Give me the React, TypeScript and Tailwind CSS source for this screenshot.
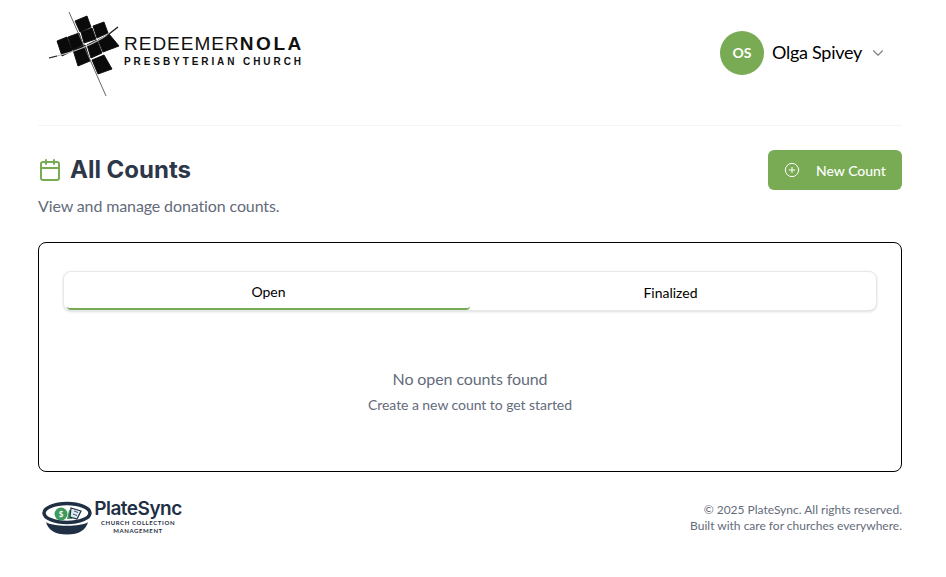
import { Calendar, ChevronDown, CirclePlus } from 'lucide-react'

// tilted cells of the church mark, corners in page px
const CELLS = [
  '75,21 87,16 91,27 80,32',
  '57,41 67,37 72,51 62,56',
  '68,37 79,33 83,45 72,50',
  '81,32 92,28 96,39 84,43',
  '93,26 104,22 108,33 97,38',
  '73,50 85,45 90,61 78,66',
  '87,45 97,40 102,53 91,58',
  '98,40 109,34 119,46 103,52',
  '92,60 104,55 112,69 98,74',
]

function ChurchLogo() {
  return (
    <svg width="90" height="90" viewBox="45 8 90 90" className="shrink-0">
      <g fill="#0a0a0a" stroke="#0a0a0a" strokeWidth="0.9">
        {CELLS.map((points) => (
          <polygon key={points} points={points} />
        ))}
      </g>
      <path d="M69 12 L106 96" stroke="#666" strokeWidth="1" fill="none" />
      <path d="M49 58 C70 53 95 46 118 27" stroke="#bbb" strokeWidth="1.2" fill="none" />
      <path d="M49 58 L57 56 M106 37 C110 33 114 30 118 27" stroke="#222" strokeWidth="1.2" fill="none" />
    </svg>
  )
}

function BowlLogo() {
  return (
    <svg width="58" height="40" viewBox="0 0 58 40" className="shrink-0">
      <path d="M8 26 C14 31 44 31 50 26 C48 34 41 38.5 29 38.5 C17 38.5 10 34 8 26 Z" fill="#1f3044" />
      <ellipse cx="29" cy="17" rx="23" ry="9.5" fill="#fff" stroke="#1f3044" strokeWidth="3.5" />
      <circle cx="23" cy="18" r="6.5" fill="#3f9a5c" />
      <text x="23" y="21" textAnchor="middle" fontSize="8" fontWeight="700" fill="#fff" fontFamily="Lato, sans-serif">$</text>
      <path d="M29 23 L31 14 L36 15 L34 23 Z" fill="#3f9a5c" />
      <path d="M33 12 L43 15 L39 23 L32 21 Z" fill="#dbeaf3" stroke="#1f3044" strokeWidth="1.2" />
      <path d="M36 15 L40 16.5 M35 18 L39 19.5" stroke="#1f3044" strokeWidth="0.8" fill="none" />
    </svg>
  )
}

export default function App() {
  return (
    <div className="min-h-[577px] bg-white pl-[38px] pr-[44px] font-['Lato',sans-serif] text-black">
      <header className="flex h-[126px] items-center justify-between border-b border-[#f3f4f6] pb-[20px]">
        <div className="ml-[7px] flex items-center">
          <ChurchLogo />
          <div className="-ml-[11px] -mt-[3px] font-['Liberation_Sans',sans-serif] text-[#111]">
            <div className="text-[19px] leading-[18px] tracking-[1px]">
              REDEEMER<span className="font-bold tracking-[2.6px]">NOLA</span>
            </div>
            <div className="mt-[3px] text-[10px] font-bold leading-[12px] tracking-[2.92px]">PRESBYTERIAN CHURCH</div>
          </div>
        </div>
        <div className="mr-[15px] flex items-center">
          <div className="flex size-[44px] items-center justify-center rounded-full bg-[#78ab54] text-[14px] font-bold text-white">OS</div>
          <span className="ml-[8px] text-[18px] tracking-[-0.27px]">Olga Spivey</span>
          <ChevronDown className="ml-[7px] size-[18px] text-[#7b7f87]" strokeWidth={1.5} />
        </div>
      </header>

      <section className="mt-[24px] flex items-start justify-between">
        <div>
          <h1 className="flex h-[40px] items-center font-['Inter',sans-serif] text-[24px] font-bold text-[#2d3748]">
            <Calendar className="mr-[8px] size-[24px] text-[#78ab54]" strokeWidth={2} />
            All Counts
          </h1>
          <p className="mt-[4px] text-[16px] leading-[24px] tracking-[-0.12px] text-[#646b7b]">View and manage donation counts.</p>
        </div>
        <button type="button" className="flex h-[40px] w-[134px] items-center rounded-md bg-[#78ab54] pl-[16px] text-[14px] font-medium text-white">
          <CirclePlus className="size-[16px]" strokeWidth={1.5} />
          <span className="ml-[16px]">New Count</span>
        </button>
      </section>

      <section className="mt-[24px] h-[230px] rounded-lg border border-black px-[24px] pt-[28px]">
        <div className="flex h-[40px] rounded-lg border border-[#e5e7eb] bg-white pl-[3px] shadow-sm">
          <div className="flex w-[403px] items-center justify-center rounded-b-[4px] border-b-2 border-[#78ab54] pt-[3px] text-[14px]">Open</div>
          <div className="flex flex-1 items-center justify-center pr-[5px] pt-[2px] text-[14px]">Finalized</div>
        </div>
        <div className="mt-[56px] text-center">
          <p className="text-[16px] leading-[24px] tracking-[-0.1px] text-[#646b7b]">No open counts found</p>
          <p className="mt-[4px] text-[14px] leading-[20px] tracking-[-0.06px] text-[#646b7b]">Create a new count to get started</p>
        </div>
      </section>

      <footer className="mt-[24px] flex h-[40px] items-center justify-between">
        <div className="flex items-center">
          <BowlLogo />
          <div className="-ml-[2px] w-[88px] text-center text-[#1f3044]">
            <div className="pt-[1px] font-['Inter',sans-serif] text-[19px] font-semibold leading-[20px] tracking-[-0.5px]">PlateSync</div>
            <div className="text-[6px] font-bold leading-[8px] tracking-[0.6px]">
              CHURCH COLLECTION
              <br />
              MANAGEMENT
            </div>
          </div>
        </div>
        <div className="mt-[4px] text-right text-[12px] leading-[16px] text-[#646b7b]">
          <p>© 2025 PlateSync. All rights reserved.</p>
          <p>Built with care for churches everywhere.</p>
        </div>
      </footer>
    </div>
  )
}
